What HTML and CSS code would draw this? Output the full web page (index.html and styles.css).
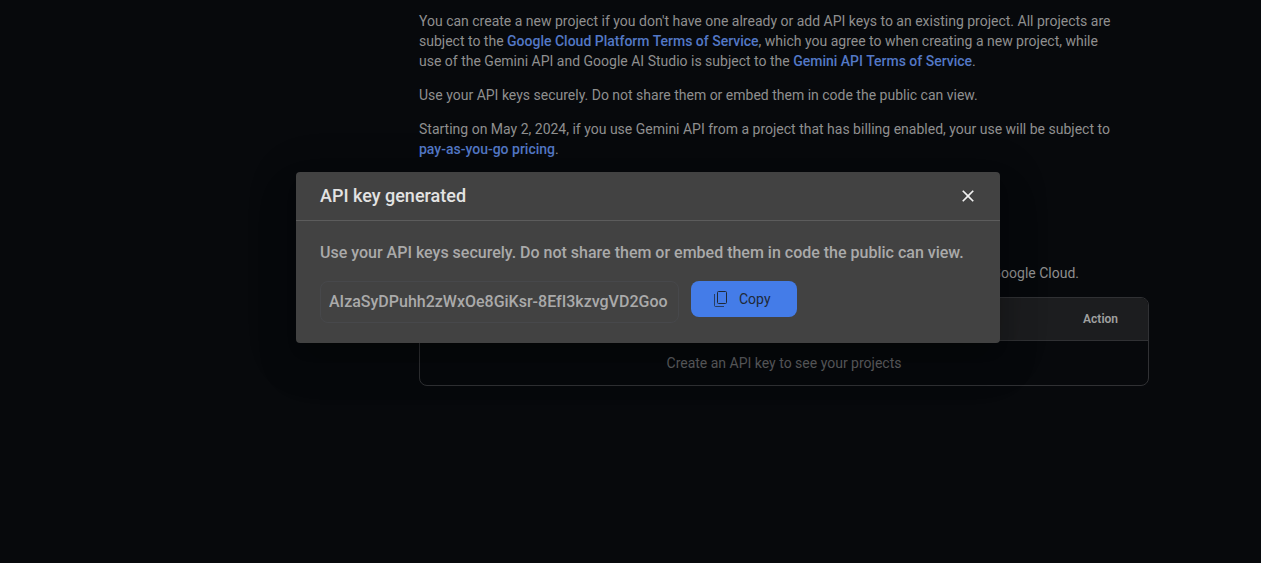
FILE: index.html
```html
<!DOCTYPE html>
<html lang="en">
<head>
<meta charset="utf-8">
<meta name="viewport" content="width=device-width, initial-scale=1">
<title>API keys</title>
<link rel="stylesheet" href="styles.css">
</head>
<body>
<div class="page">
  <main class="content">
    <div class="intro">
      <p>You can create a new project if you don't have one already or add API keys to an existing project. All projects are subject to the <a href="#">Google Cloud Platform Terms of Service</a>, which you agree to when creating a new project, while use of the Gemini API and Google AI Studio is subject to the <a href="#">Gemini API Terms of Service</a>.</p>
      <p>Use your API keys securely. Do not share them or embed them in code the public can view.</p>
      <p>Starting on May 2, 2024, if you use Gemini API from a project that has billing enabled, your use will be subject to <a href="#">pay-as-you-go pricing</a>.</p>
    </div>
    <p class="listing-note">Google Cloud.</p>
    <table class="keys">
      <thead><tr><th scope="col">Action</th></tr></thead>
      <tbody><tr><td>Create an API key to see your projects</td></tr></tbody>
    </table>
  </main>
</div>
<div class="overlay">
  <dialog class="dialog" open aria-labelledby="dialog-title">
    <header class="dialog-header">
      <h2 class="dialog-title" id="dialog-title">API key generated</h2>
      <button class="close" type="button" aria-label="Close">
        <svg viewBox="0 0 24 24" width="20" height="20" aria-hidden="true"><path d="M19 6.41 17.59 5 12 10.59 6.41 5 5 6.41 10.59 12 5 17.59 6.41 19 12 13.41 17.59 19 19 17.59 13.41 12z" fill="currentColor"/></svg>
      </button>
    </header>
    <div class="dialog-body">
      <p class="dialog-text">Use your API keys securely. Do not share them or embed them in code the public can view.</p>
      <div class="key-row">
        <input class="key" type="text" readonly aria-label="API key" value="AIzaSyDPuhh2zWxOe8GiKsr-8EfI3kzvgVD2Goo">
        <button class="copy" type="button">
          <svg viewBox="0 0 16 18" width="16" height="18" fill="none" stroke="currentColor" aria-hidden="true"><rect x="4.5" y="1.5" width="9" height="12" rx="1"/><path d="M1.5 4v11.500q0 1 1 1H11" opacity=".75"/></svg>
          Copy
        </button>
      </div>
    </div>
  </dialog>
</div>
</body>
</html>
```
FILE: styles.css
```css
* { box-sizing: border-box; }

body {
  margin: 0;
  min-height: 100vh;
  background: #07090c;
  color: #8f8f8f;
  font: 14px/20px Roboto, "Liberation Sans", sans-serif;
}

p, h2 { margin: 0; }

.page { padding: 11px 16px 0 323px; }

.content {
  max-width: 730px;
  margin: 0 auto;
}

.intro {
  display: flex;
  flex-direction: column;
  gap: 14px;
  padding-right: 34px;
}

.intro a {
  color: #5378c6;
  font-weight: 500;
  text-decoration: none;
}

.listing-note {
  margin-top: 104px;
  padding-right: 70px;
  text-align: right;
}

.keys {
  width: 100%;
  margin-top: 14px;
  border: 1px solid #303134;
  border-radius: 8px;
  border-spacing: 0;
  overflow: hidden;
}

.keys th {
  height: 43px;
  padding: 0 30px;
  border-bottom: 1px solid #303134;
  background: #1c1d1f;
  color: #a0a0a0;
  font-size: 12px;
  font-weight: 600;
  text-align: right;
}

.keys td {
  height: 44px;
  padding: 0;
  color: #606164;
  text-align: center;
}

.overlay {
  position: absolute;
  inset: 0;
  display: flex;
  align-items: center;
  justify-content: center;
  padding: 0 0 48px 35px;
}

.dialog {
  position: static;
  width: 704px;
  max-width: 100%;
  margin: 0;
  padding: 0;
  border: 0;
  border-radius: 4px;
  background: #424242;
  color: #aaaaaa;
  box-shadow: 0 11px 15px -7px rgba(0, 0, 0, .2), 0 24px 38px 3px rgba(0, 0, 0, .14), 0 9px 46px 8px rgba(0, 0, 0, .12);
}

.dialog-header {
  display: flex;
  align-items: center;
  justify-content: space-between;
  padding: 12px 22px 12px 24px;
  border-bottom: 1px solid #5c5c5c;
}

.dialog-title {
  color: #e3e3e3;
  font-size: 18px;
  font-weight: 500;
  line-height: 24px;
}

.close {
  display: flex;
  padding: 0;
  border: 0;
  background: none;
  color: #f1f1f1;
}

.dialog-body { padding: 20px 24px; }

.dialog-text {
  font-size: 16px;
  font-weight: 500;
  line-height: 24px;
}

.key-row {
  display: flex;
  align-items: flex-start;
  gap: 12px;
  margin-top: 16px;
}

.key {
  width: 359px;
  height: 42px;
  padding: 0 8px 2px;
  border: 1px solid #47484b;
  border-radius: 8px;
  background: none;
  color: inherit;
  font: inherit;
  font-size: 16px;
  font-weight: 500;
}

.copy {
  display: flex;
  align-items: center;
  gap: 10px;
  height: 36px;
  padding: 0 26px 0 22px;
  border: 0;
  border-radius: 8px;
  background: #447ce8;
  color: #1f2937;
  font: inherit;
}
```
